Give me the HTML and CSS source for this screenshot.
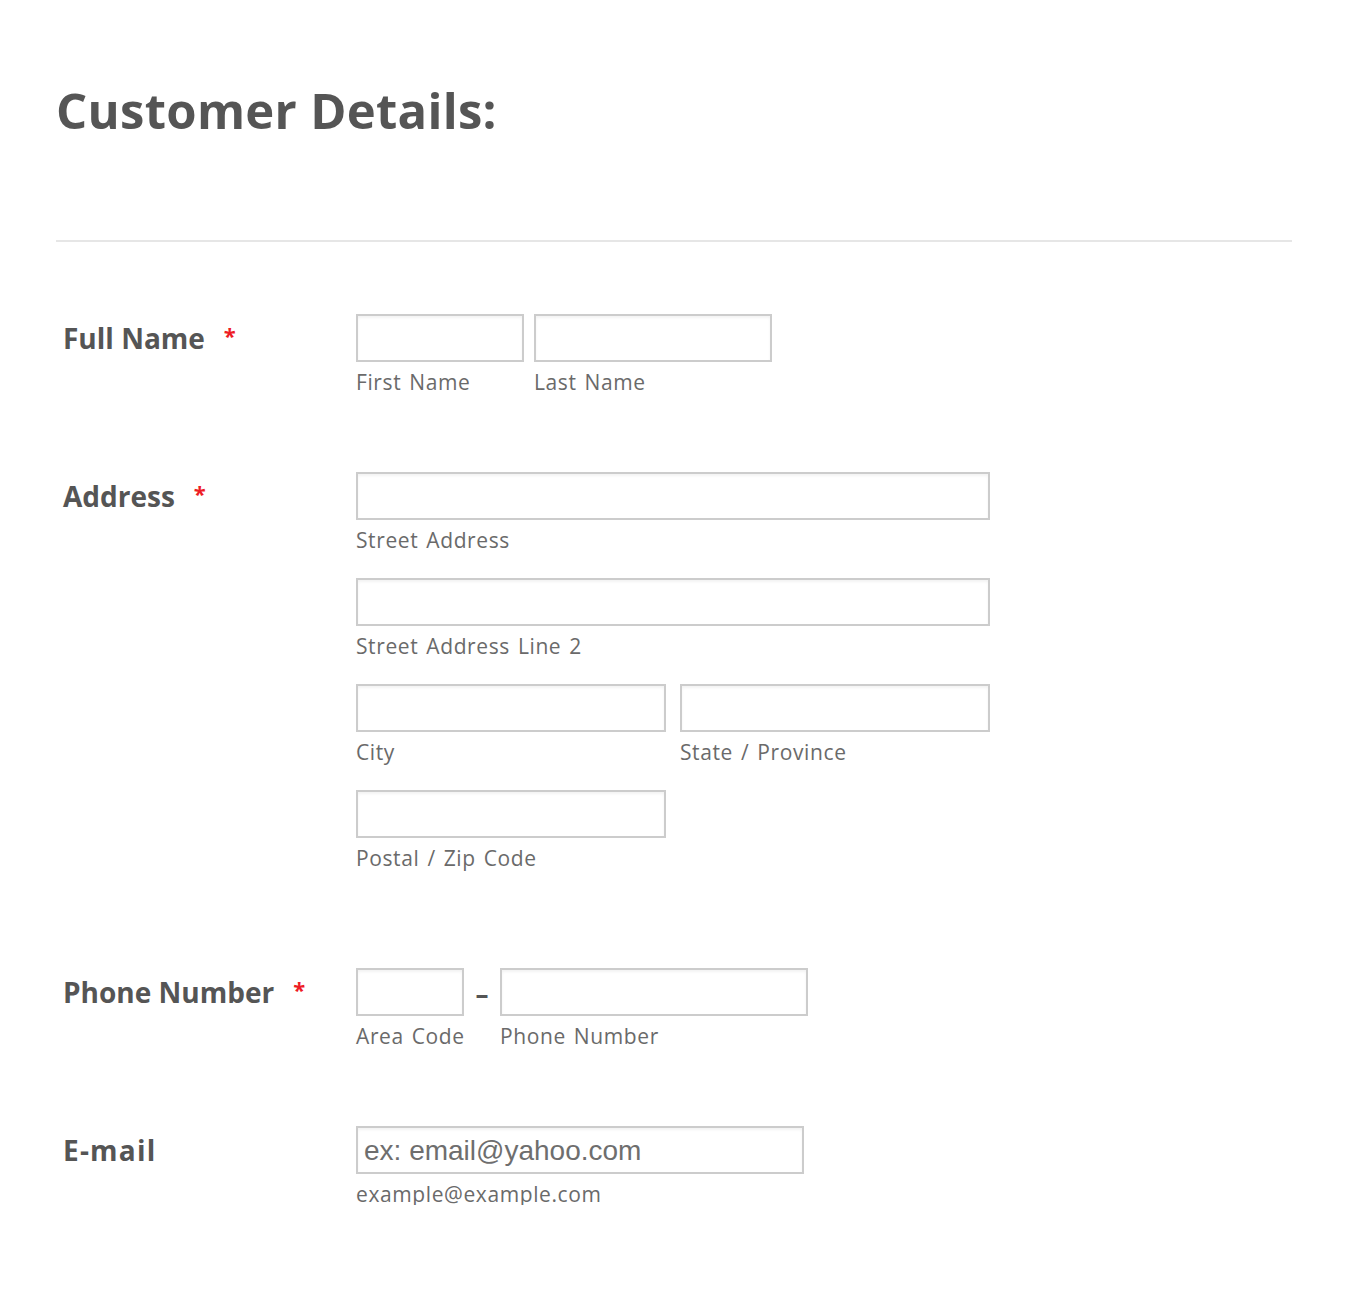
FILE: index.html
```html
<!DOCTYPE html>
<html lang="en">
<head>
<meta charset="utf-8">
<title>Customer Details</title>
<link rel="stylesheet" href="styles.css">
</head>
<body>
<div class="form">
  <h1 class="title">Customer Details:</h1>
  <div class="divider"></div>

  <div class="row">
    <div class="label">Full Name<span class="req">*</span></div>
    <div class="fields">
      <div class="line">
        <div class="field w168"><input class="input" type="text"><span class="sub">First Name</span></div>
        <div class="field w238"><input class="input" type="text"><span class="sub">Last Name</span></div>
      </div>
    </div>
  </div>

  <div class="row row-address">
    <div class="label">Address<span class="req">*</span></div>
    <div class="fields stack">
      <div class="line">
        <div class="field w634"><input class="input" type="text"><span class="sub">Street Address</span></div>
      </div>
      <div class="line">
        <div class="field w634"><input class="input" type="text"><span class="sub">Street Address Line 2</span></div>
      </div>
      <div class="line wide-gap">
        <div class="field w310"><input class="input" type="text"><span class="sub">City</span></div>
        <div class="field w310"><input class="input" type="text"><span class="sub">State / Province</span></div>
      </div>
      <div class="line">
        <div class="field w310"><input class="input" type="text"><span class="sub">Postal / Zip Code</span></div>
      </div>
    </div>
  </div>

  <div class="row">
    <div class="label">Phone Number<span class="req">*</span></div>
    <div class="fields">
      <div class="line no-gap">
        <div class="field w108"><input class="input" type="text"><span class="sub">Area Code</span></div>
        <div class="dash">&ndash;</div>
        <div class="field w308"><input class="input" type="text"><span class="sub">Phone Number</span></div>
      </div>
    </div>
  </div>

  <div class="row">
    <div class="label label-email">E-mail</div>
    <div class="fields">
      <div class="line">
        <div class="field w448"><input class="input email" type="email" placeholder="ex: email@yahoo.com"><span class="sub">example@example.com</span></div>
      </div>
    </div>
  </div>
</div>
</body>
</html>
```

FILE: styles.css
```css
html, body {
  margin: 0;
  padding: 0;
  background: #ffffff;
}

body {
  font-family: "Open Sans", "DejaVu Sans", sans-serif;
  color: #555555;
}

.form {
  padding: 0 60px 0 56px;
}

.title {
  margin: 80px 0 0 0;
  font-size: 49px;
  line-height: 60px;
  letter-spacing: 0.3px;
  font-weight: 700;
  color: #555555;
}

.divider {
  margin-top: 100px;
  height: 2px;
  width: 1236px;
  background: #e6e6e6;
}

.row {
  display: grid;
  grid-template-columns: 300px 1fr;
  margin-top: 72px;
}

.row + .row {
  margin-top: 79px;
}

.row-address + .row {
  margin-top: 99px;
}

.label {
  padding-left: 7px;
  font-size: 28px;
  font-weight: 700;
  line-height: 48px;
  color: #555555;
  white-space: nowrap;
}

.label-email {
  letter-spacing: 1.2px;
}

.req {
  color: #ee1c25;
  font-size: 22px;
  font-weight: 700;
  margin-left: 19px;
  position: relative;
  top: -5px;
}

.fields.stack {
  display: flex;
  flex-direction: column;
  gap: 27px;
}

.line {
  display: flex;
  gap: 10px;
  align-items: flex-start;
}

.line.wide-gap {
  gap: 14px;
}

.line.no-gap {
  gap: 0;
}

.field {
  display: flex;
  flex-direction: column;
  flex: none;
}

.input {
  box-sizing: border-box;
  width: 100%;
  height: 48px;
  margin: 0;
  padding: 2px 6px 0 6px;
  border: 2px solid #cccccc;
  border-radius: 0;
  background: #ffffff;
  box-shadow: inset 0 2px 3px rgba(0, 0, 0, 0.05);
  outline: none;
  font-family: "Liberation Sans", Arial, sans-serif;
  font-size: 28px;
  color: #555555;
}

.input::placeholder {
  color: #6e6e6e;
  opacity: 1;
}

.w108 { width: 108px; }
.w168 { width: 168px; }
.w238 { width: 238px; }
.w308 { width: 308px; }
.w310 { width: 310px; }
.w448 { width: 448px; }
.w634 { width: 634px; }

.sub {
  margin-top: 9px;
  font-size: 21px;
  line-height: 22px;
  letter-spacing: 0.6px;
  word-spacing: 2px;
  color: #6a6a6a;
  white-space: nowrap;
}

.dash {
  flex: none;
  width: 36px;
  text-align: center;
  font-size: 26px;
  font-weight: 700;
  line-height: 52px;
  color: #555555;
}
```
